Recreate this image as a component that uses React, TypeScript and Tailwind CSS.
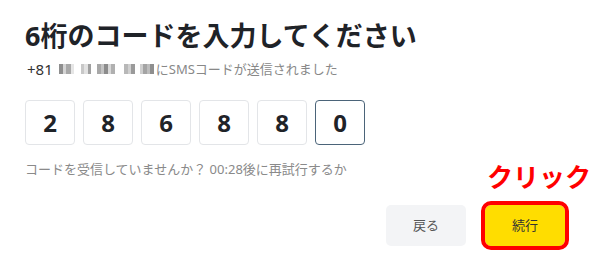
const digits = ['2', '8', '6', '8', '8', '0']

function Blur() {
  // pixelated (masked) phone number
  const blocks = [
    'w-[4px] bg-[#8e8e8e]', 'w-[3px] bg-[#d4d4d4]', 'w-[5px] bg-[#a8a8a8]', 'w-[3px] bg-[#e6e6e6]', 'w-[7px] bg-transparent',
    'w-[3px] bg-[#c8c8c8]', 'w-[4px] bg-[#e2e2e2]', 'w-[3px] bg-[#a0a0a0]', 'w-[6px] bg-transparent',
    'w-[4px] bg-[#a8a8a8]', 'w-[3px] bg-[#c4c4c4]', 'w-[4px] bg-[#8c8c8c]', 'w-[3px] bg-[#d8d8d8]', 'w-[4px] bg-[#b0b0b0]',
    'w-[9px] bg-transparent', 'w-[4px] bg-[#b8b8b8]', 'w-[3px] bg-[#d0d0d0]', 'w-[4px] bg-[#9a9a9a]', 'w-[5px] bg-transparent',
    'w-[3px] bg-[#cfcfcf]', 'w-[4px] bg-[#a4a4a4]', 'w-[3px] bg-[#bdbdbd]', 'w-[4px] bg-[#8e8e8e]',
  ]
  return (
    <span className="inline-flex h-[10px] items-stretch ml-[6px] mr-[2px]">
      {blocks.map((c, i) => (
        <span key={i} className={c} />
      ))}
    </span>
  )
}

export default function App() {
  return (
    <div
      className="w-[600px] h-[262px] bg-white relative overflow-hidden pl-[25px] pt-[18px]"
      style={{ fontFamily: '"Noto Sans", "Noto Sans CJK JP", sans-serif' }}
    >
      <h1 className="text-[27px] font-bold leading-[36px] text-[#1f2328]">
        6桁のコードを入力してください
      </h1>
      <p className="mt-[6px] text-[13px] leading-[18px] text-[#888] flex items-center">
        <span className="text-[15px] text-[#333] pl-[2px]">+81</span>
        <Blur />
        <span>にSMSコードが送信されました</span>
      </p>

      <div className="flex gap-[8px] mt-[22px]">
        {digits.map((d, i) => (
          <div
            key={i}
            className={`w-[50px] h-[45px] rounded-[4px] border flex items-center justify-center text-[24px] font-bold text-[#1f2328] ${
              i === 5 ? 'border-[#4b6479]' : 'border-[#e3e5e8]'
            }`}
          >
            {d}
          </div>
        ))}
      </div>

      <p className="mt-[16px] text-[13px] leading-[16px] text-[#8a8a8a]">
        コードを受信していませんか？ 00:28後に再試行するか
      </p>

      <div className="flex justify-end pr-[35px] mt-[28px] gap-[19px]">
        <button className="w-[80px] h-[41px] rounded-[5px] bg-[#f3f4f6] text-[13px] text-[#555]">
          戻る
        </button>
        <div className="relative">
          <span className="absolute left-[2px] top-[-43px] whitespace-nowrap text-[26px] font-bold leading-[30px] text-[#ff0000]">
            クリック
          </span>
          <button className="w-[80px] h-[41px] rounded-[6px] bg-[#ffdd00] text-[13px] text-[#333] outline outline-[4px] outline-[#ff0000]">
            続行
          </button>
        </div>
      </div>
    </div>
  )
}
